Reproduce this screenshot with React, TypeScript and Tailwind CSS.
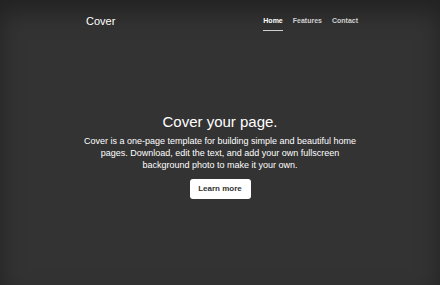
export default function App() {
  return (
    <div
      className="w-[440px] h-[285px] bg-[#333333] text-white flex flex-col overflow-hidden shadow-[inset_0_12px_24px_rgba(0,0,0,0.35)]"
      style={{ fontFamily: '"Liberation Sans", Arial, sans-serif' }}
    >
      <header className="w-[276px] mx-auto mt-[14px] flex items-start justify-between">
        <div className="text-[11px] leading-[15px] mt-[0px] ml-[4px]">Cover</div>
        <nav className="flex gap-[10px] text-[7px] font-bold leading-[10px] mt-[2px]">
          <a className="text-white border-b-[1.5px] border-[#cfcfcf] pb-[4px]">Home</a>
          <a className="text-[#d0d0d0]">Features</a>
          <a className="text-[#d0d0d0]">Contact</a>
        </nav>
      </header>
      <main className="flex flex-col items-center text-center mt-[82px]">
        <h1 className="text-[15px] leading-[18px] mb-[4px]">Cover your page.</h1>
        <p className="text-[9px] leading-[12px] w-[282px]">
          Cover is a one-page template for building simple and beautiful home pages. Download, edit the text, and add your own fullscreen background photo to make it your own.
        </p>
        <button className="mt-[8px] bg-white text-[#333] font-bold text-[8px] rounded-[3px] w-[61px] h-[20px]">
          Learn more
        </button>
      </main>
    </div>
  );
}
